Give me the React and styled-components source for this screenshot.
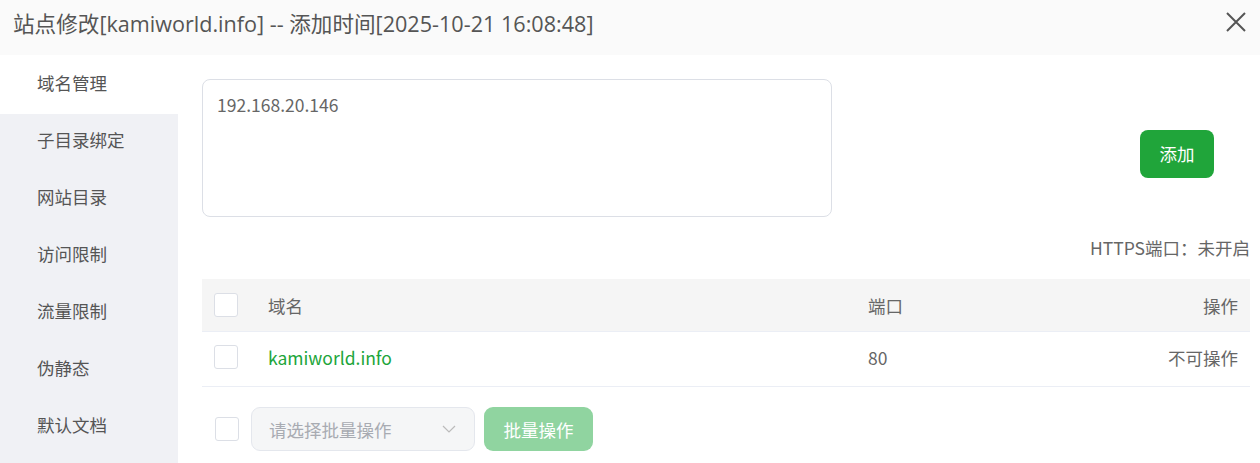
import React from "react";
import styled, { createGlobalStyle } from "styled-components";

const GlobalStyle = createGlobalStyle`
  html, body {
    margin: 0;
    padding: 0;
    background: #fff;
  }
  body {
    font-family: "Noto Sans CJK SC", "Noto Sans", sans-serif;
    color: #555;
  }
  * {
    box-sizing: border-box;
  }
`;

const menu = ["域名管理", "子目录绑定", "网站目录", "访问限制", "流量限制", "伪静态", "默认文档"];

export default function App() {
  return (
    <>
      <GlobalStyle />
      <Dialog>
        <Header>
          <Title>站点修改[kamiworld.info] -- 添加时间[2025-10-21 16:08:48]</Title>
          <Close aria-label="close">
            <svg width="20" height="20" viewBox="0 0 20 20">
              <path d="M1 1L19 19M19 1L1 19" stroke="#555" strokeWidth="2" fill="none" />
            </svg>
          </Close>
        </Header>
        <Body>
          <Sidebar>
            {menu.map((m, i) => (
              <MenuItem key={m} $active={i === 0}>
                {m}
              </MenuItem>
            ))}
          </Sidebar>
          <Content>
            <TopRow>
              <DomainInput defaultValue="192.168.20.146" />
              <AddButton>添加</AddButton>
            </TopRow>
            <HttpsInfo>HTTPS端口：未开启</HttpsInfo>
            <Table>
              <HeadRow>
                <Check />
                <NameCell>域名</NameCell>
                <PortCell>端口</PortCell>
                <ActionCell>操作</ActionCell>
              </HeadRow>
              <DataRow>
                <Check />
                <NameCell $link>kamiworld.info</NameCell>
                <PortCell>80</PortCell>
                <ActionCell>不可操作</ActionCell>
              </DataRow>
            </Table>
            <BatchBar>
              <Check />
              <BatchSelect>
                <span>请选择批量操作</span>
                <svg width="14" height="8" viewBox="0 0 14 8">
                  <path d="M1 1L7 7L13 1" stroke="#bbb" strokeWidth="1.2" fill="none" />
                </svg>
              </BatchSelect>
              <BatchButton>批量操作</BatchButton>
            </BatchBar>
          </Content>
        </Body>
      </Dialog>
    </>
  );
}

const Dialog = styled.div`
  width: 1260px;
  height: 463px;
  display: flex;
  flex-direction: column;
  overflow: hidden;
`;

const Header = styled.div`
  height: 55px;
  flex-shrink: 0;
  background: #fafafa;
  display: flex;
  align-items: center;
  justify-content: space-between;
  padding: 0 14px 0 14px;
`;

const Title = styled.div`
  font-family: "Open Sans", "Noto Sans CJK SC", sans-serif;
  font-size: 21.6px;
  color: #555;
  margin-top: -11px;
  margin-left: -1px;
`;

const Close = styled.div`
  width: 20px;
  height: 20px;
  display: flex;
  margin-top: -11px;
`;

const Body = styled.div`
  flex: 1;
  display: flex;
`;

const Sidebar = styled.div`
  width: 178px;
  flex-shrink: 0;
  background: #f0f1f5;
  display: flex;
  flex-direction: column;
`;

const MenuItem = styled.div`
  height: ${(p) => (p.$active ? "59px" : "57px")};
  margin-bottom: ${(p) => (p.$active ? "-2px" : "0")};
  display: flex;
  align-items: center;
  padding-left: 37px;
  padding-bottom: 3px;
  font-size: 17.5px;
  color: #555;
  background: ${(p) => (p.$active ? "#fff" : "transparent")};
  &:first-child {
    padding-bottom: 5px;
  }
`;

const Content = styled.div`
  flex: 1;
  padding: 24px 10px 0 24px;
  display: flex;
  flex-direction: column;
`;

const TopRow = styled.div`
  display: flex;
  align-items: flex-start;
`;

const DomainInput = styled.textarea`
  width: 630px;
  height: 138px;
  border: 1px solid #dcdfe6;
  border-radius: 8px;
  padding: 12px 14px;
  font-family: "Noto Sans CJK SC", sans-serif;
  font-size: 17.5px;
  line-height: 1.5;
  color: #666;
  resize: none;
  outline: none;
`;

const AddButton = styled.button`
  margin: 51px 36px 0 auto;
  width: 74px;
  height: 48px;
  border: none;
  border-radius: 8px;
  background: #20a53a;
  color: #fff;
  font-family: "Noto Sans CJK SC", sans-serif;
  font-size: 17.5px;
  padding: 0 0 2px;
`;

const HttpsInfo = styled.div`
  text-align: right;
  font-size: 17.5px;
  color: #666;
  margin-top: 18px;
  line-height: 26px;
`;

const Table = styled.div`
  margin-top: 18px;
  display: flex;
  flex-direction: column;
`;

const Row = styled.div`
  display: flex;
  align-items: center;
  padding: 0 12px;
  font-size: 17.5px;
  color: #666;
`;

const HeadRow = styled(Row)`
  height: 53px;
  background: #f5f5f5;
  border-bottom: 1px solid #ebeef5;
`;

const DataRow = styled(Row)`
  height: 55px;
  border-bottom: 1px solid #ebeef5;
  padding-bottom: 4px;
`;

const Check = styled.span`
  width: 24px;
  height: 24px;
  flex-shrink: 0;
  border: 1px solid #dcdfe6;
  border-radius: 3px;
  background: #fff;
`;

const NameCell = styled.div`
  width: 630px;
  padding-left: 30px;
  color: ${(p) => (p.$link ? "#20a53a" : "#666")};
`;

const PortCell = styled.div`
  flex: 1;
`;

const ActionCell = styled.div`
  text-align: right;
`;

const BatchBar = styled.div`
  display: flex;
  align-items: center;
  gap: 9px;
  margin-top: 20px;
  padding-left: 13px;

  & > ${Check} {
    margin-right: 3px;
  }
`;

const BatchSelect = styled.div`
  width: 224px;
  height: 44px;
  border: 1px solid #e4e7ed;
  border-radius: 9px;
  background: #f5f6f7;
  display: flex;
  align-items: center;
  justify-content: space-between;
  padding: 0 18px 0 17px;
  font-size: 17.5px;
  color: #a8abb2;
`;

const BatchButton = styled.button`
  width: 109px;
  height: 44px;
  border: none;
  border-radius: 9px;
  background: #90d4a0;
  color: #fff;
  font-family: "Noto Sans CJK SC", sans-serif;
  font-size: 17.5px;
  padding: 0;
`;
